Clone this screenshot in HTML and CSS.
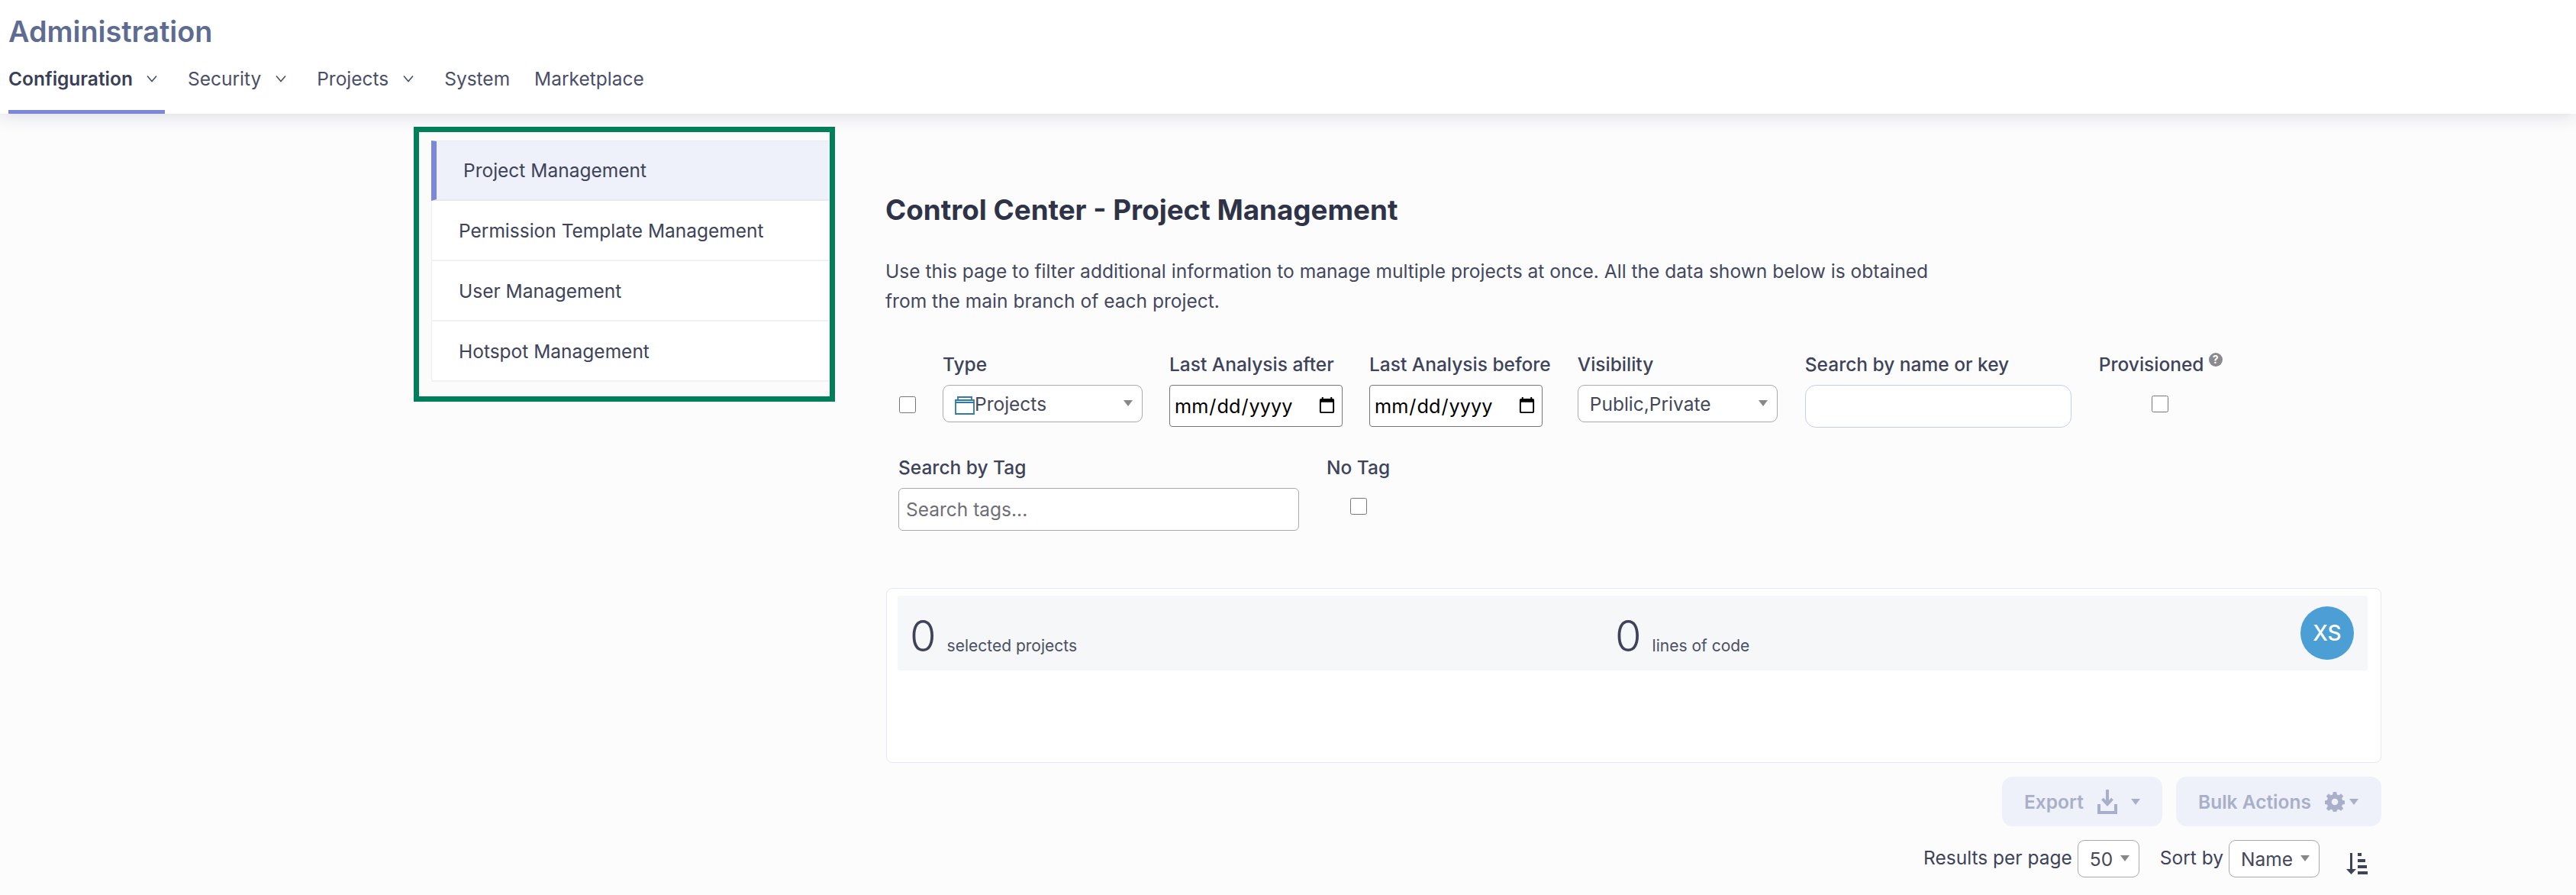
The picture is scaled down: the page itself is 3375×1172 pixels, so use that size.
FILE: index.html
```html
<!DOCTYPE html>
<html lang="en">
<head>
<meta charset="utf-8">
<title>Administration</title>
<link rel="stylesheet" href="styles.css">
</head>
<body>
<header class="topbar">
  <div class="brand">Administration</div>
  <nav class="tabs">
    <a class="tab tab-active">Configuration <svg class="chev" viewBox="0 0 14 10"><path d="M1 1.5 7 8.5 13 1.5"/></svg></a>
    <a class="tab">Security <svg class="chev" viewBox="0 0 14 10"><path d="M1 1.5 7 8.5 13 1.5"/></svg></a>
    <a class="tab">Projects <svg class="chev" viewBox="0 0 14 10"><path d="M1 1.5 7 8.5 13 1.5"/></svg></a>
    <a class="tab">System</a>
    <a class="tab">Marketplace</a>
  </nav>
</header>
<div class="layout">
  <aside class="side-frame">
    <ul class="side-list">
      <li class="side-item side-active">Project Management</li>
      <li class="side-item">Permission Template Management</li>
      <li class="side-item">User Management</li>
      <li class="side-item">Hotspot Management</li>
    </ul>
  </aside>
  <main class="main">
    <h1 class="title">Control Center - Project Management</h1>
    <p class="intro">Use this page to filter additional information to manage multiple projects at once. All the data shown below is obtained<br>from the main branch of each project.</p>
    <div class="filters">
      <input class="check check-all" type="checkbox">
      <div class="field">
        <label class="lbl">Type</label>
        <div class="sel sel-type">
          <svg class="proj-icon" viewBox="0 0 26 24"><path d="M1 8h24v15H1zM1 8V5h24v3M4 5V1h18v4"/></svg><span>Projects</span><i class="caret"></i>
        </div>
      </div>
      <div class="field">
        <label class="lbl">Last Analysis after</label>
        <input class="date" type="date">
      </div>
      <div class="field">
        <label class="lbl">Last Analysis before</label>
        <input class="date" type="date">
      </div>
      <div class="field">
        <label class="lbl">Visibility</label>
        <div class="sel sel-vis"><span>Public,Private</span><i class="caret"></i></div>
      </div>
      <div class="field field-search">
        <label class="lbl">Search by name or key</label>
        <input class="search" type="text">
      </div>
      <div class="field field-prov">
        <label class="lbl">Provisioned<span class="help">?</span></label>
        <input class="check check-prov" type="checkbox">
      </div>
    </div>
    <div class="filters-2">
      <div class="field">
        <label class="lbl">Search by Tag</label>
        <input class="tags" type="text" placeholder="Search tags...">
      </div>
      <div class="field field-notag">
        <label class="lbl">No Tag</label>
        <input class="check check-notag" type="checkbox">
      </div>
    </div>
    <section class="card">
      <div class="band">
        <div class="stat stat-left"><span class="num">0</span><span class="unit">selected projects</span></div>
        <div class="stat"><span class="num">0</span><span class="unit">lines of code</span></div>
        <div class="avatar">XS</div>
      </div>
    </section>
    <div class="actions">
      <button class="btn btn-export" disabled>Export
        <svg class="btn-icon" viewBox="0 0 26 32"><path d="M13 0v18M6.500 12 13 19l6.500-7M2 19v11h22V19" /></svg>
        <i class="caret caret-btn caret-export"></i>
      </button>
      <button class="btn btn-bulk" disabled>Bulk Actions
        <svg class="gear" viewBox="0 0 24 24"><path d="M10 0h4l.6 3.300 2.100.9L19.500 2.300l2.800 2.800-1.900 2.800.9 2.100 3 .6v4l-3 .6-.9 2.100 1.900 2.800-2.800 2.800-2.800-1.900-2.100.9-.6 3.300h-4l-.6-3.300-2.100-.9-2.800 1.900-2.800-2.800 1.900-2.800-.9-2.100-3-.6v-4l3-.6.9-2.100L1.700 5.100l2.800-2.800 2.800 1.900 2.100-.9zM12 8a4 4 0 1 0 0 8 4 4 0 0 0 0-8z" fill-rule="evenodd"/></svg>
        <i class="caret caret-btn caret-bulk"></i>
      </button>
    </div>
    <div class="paging">
      <span class="pg-label">Results per page</span>
      <div class="sel sel-page"><span>50</span><i class="caret"></i></div>
      <span class="pg-label pg-sort">Sort by</span>
      <div class="sel sel-sort"><span>Name</span><i class="caret"></i></div>
      <svg class="sort-icon" viewBox="0 0 28 28"><path d="M5 0h3v21h5l-6.500 7L0 21h5zM15 0h5v4h-5zM15 8h10v4H15zM15 16h12v4H15zM15 24h13v4H15z"/></svg>
    </div>
  </main>
</div>
</body>
</html>
```
FILE: styles.css
```css
* { box-sizing: border-box; }
html, body { margin: 0; padding: 0; }
body {
  background: #fcfcfd;
  color: #3e4359;
  font-family: Inter, "Noto Sans", sans-serif;
  font-size: 24.5px;
  overflow: hidden;
  height: 1172px;
}

.topbar {
  height: 149px;
  background: #fff;
  padding: 21px 11px 0;
  box-shadow: 0 2px 22px rgba(40, 44, 60, .16);
  position: relative;
}
.brand { font-size: 37.8px; line-height: 40px; font-weight: 600; color: #5f6c91; }
.tabs { display: flex; margin-top: 23px; }
.tab {
  display: flex;
  align-items: center;
  height: 65px;
  padding-bottom: 27px;
  margin-right: 32px;
  font-size: 24.5px;
  color: #4a4f68;
  white-space: pre;
}
.tab-active {
  font-weight: 600;
  color: #3a3f55;
  box-shadow: inset 0 -5px 0 #7b87d9;
  width: 205px;
  margin-right: 30px;
}
.chev { width: 14px; height: 10px; margin: 0 8px 0 12px; fill: none; stroke: #4a4f68; stroke-width: 1.600; }

.layout { display: flex; padding-left: 542px; }
.side-frame {
  width: 552px;
  height: 360px;
  margin-top: 17px;
  border: 7px solid #00805a;
  padding: 11px 0 0 16px;
  background: #fbfbfc;
}
.side-list { list-style: none; margin: 0; padding: 0; }
.side-item {
  height: 79px;
  line-height: 79px;
  padding-left: 35px;
  background: #fff;
  border-left: 1px solid #eceef3;
  border-bottom: 2px solid #f0f1f5;
  color: #3e4359;
  font-size: 24.5px;
}
.side-active {
  background: #eef1f9;
  border-left: 7px solid #7b87d9;
  border-top: 1px solid #e8eaf2;
  border-bottom: 2px solid #e6e9f3;
  line-height: 76px;
}

.main { margin-left: 66px; width: 1960px; }
.title { margin: 104px 0 0; font-size: 36.8px; line-height: 44px; font-weight: 700; color: #2e3347; }
.intro { margin: 39px 0 0; font-size: 24.55px; line-height: 39px; color: #43485e; }

.filters { display: flex; gap: 35px; align-items: flex-start; margin: 48px 0 0 17px; }
.filters-2 { display: flex; align-items: flex-start; margin: 37px 0 0 17px; }
.field { display: flex; flex-direction: column; }
.lbl { display: block; height: 30px; line-height: 30px; margin-bottom: 12px; font-size: 24.5px; font-weight: 500; color: #3e4359; white-space: nowrap; position: relative; }
.check { width: 22px; height: 22px; margin: 0; accent-color: #7b87d9; }
.check-all { margin-top: 57px; margin-left: 1px; }
.check-prov { align-self: center; margin-top: 14px; }
.check-notag { align-self: center; margin-top: 13px; }

.sel {
  display: flex;
  align-items: center;
  height: 49px;
  background: #fff;
  border: 1px solid #a9a9ad;
  border-radius: 9px;
  color: #45485a;
  font-size: 24.5px;
  position: relative;
}
.sel-type { width: 262px; padding-left: 15px; }
.sel-vis { width: 262px; padding-left: 15px; }
.sel-page { width: 81px; padding-left: 15px; margin-left: 7px; }
.sel-sort { width: 119px; padding-left: 15px; margin-left: 7px; }
.caret { width: 0; height: 0; border-left: 6.5px solid transparent; border-right: 6.5px solid transparent; border-top: 8px solid #888; position: absolute; right: 12px; top: 19px; }
.proj-icon { width: 26px; height: 24px; margin-top: 4px; fill: none; stroke: #2f7aa8; stroke-width: 1.800; }

.date {
  width: 227px;
  height: 55px;
  padding: 0 5px 0 5px;
  background: #fff;
  border: 1px solid #767676;
  border-radius: 4px;
  font-family: Inter, sans-serif;
  font-size: 25.3px;
  color: #000;
}
.field-search { margin-left: 1px; margin-right: 1px; }
.search {
  width: 349px;
  height: 56px;
  background: #fff;
  border: 1px solid #c6cee6;
  border-radius: 14px;
  outline: 0;
}
.help {
  position: absolute;
  left: 144px;
  top: 0;
  width: 18px;
  height: 18px;
  border-radius: 50%;
  background: #8a8a8f;
  color: #fff;
  font-size: 14px;
  line-height: 18px;
  font-weight: 700;
  text-align: center;
}
.field-prov { width: 160px; }
.tags {
  width: 525px;
  height: 56px;
  padding: 0 9px;
  background: #fff;
  border: 1px solid #a9a9ad;
  border-radius: 6px;
  font-family: Inter, sans-serif;
  font-size: 24.5px;
}
.tags::placeholder { color: #6f6f76; opacity: 1; }
.field-notag { margin-left: 36px; }

.card {
  height: 229px;
  margin: 75px 0 0 1px;
  width: 1959px;
  padding: 9px 17px 0 14px;
  background: #fff;
  border: 1px solid #e3e7f5;
  border-radius: 8px;
}
.band {
  display: flex;
  align-items: center;
  height: 98px;
  padding: 8px 0 0 16px;
  background: #f6f7f9;
  border-radius: 3px;
  position: relative;
}
.stat { display: flex; align-items: baseline; }
.stat-left { width: 924px; }
.num { font-size: 56px; line-height: 60px; font-weight: 300; color: #3e4359; }
.unit { margin-left: 14px; font-size: 21px; color: #4a4f63; }
.avatar {
  position: absolute;
  right: 18px;
  top: 14px;
  width: 70px;
  height: 70px;
  border-radius: 50%;
  background: #4b9fd5;
  color: #fff;
  font-size: 28px;
  font-weight: 500;
  line-height: 70px;
  text-align: center;
}

.actions { display: flex; justify-content: flex-end; gap: 18px; margin-top: 18px; }
.btn {
  display: flex;
  align-items: center;
  height: 65px;
  padding: 0 0 0 29px;
  border: 0;
  border-radius: 14px;
  background: #eef1f9;
  color: #a9afc8;
  font-family: Inter, sans-serif;
  font-size: 24.5px;
  font-weight: 600;
  position: relative;
}
.btn-export { width: 210px; }
.btn-bulk { width: 269px; }
.btn-icon { width: 26px; height: 32px; margin-left: 18px; fill: none; stroke: #a9afc8; stroke-width: 4; }
.gear { width: 26px; height: 26px; margin-left: 18px; fill: #a9afc8; }
.caret-btn { border-top-color: #a9afc8; top: 29px; right: 29px; }
.caret-bulk { right: 30px; }

.paging { display: flex; align-items: flex-start; justify-content: flex-end; height: 49px; margin-top: 18px; padding-right: 18px; }
.pg-label { font-size: 24.5px; line-height: 46px; color: #3e4359; }
.pg-sort { margin-left: 27px; }
.sort-icon { width: 28px; height: 28px; margin: 17px 0 0 35px; fill: #3e4359; }
```
